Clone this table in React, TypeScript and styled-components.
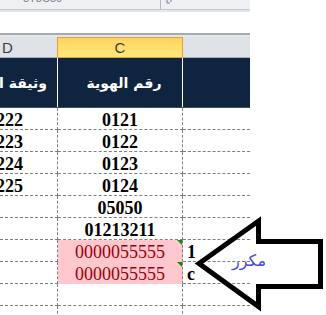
import styled, { createGlobalStyle } from "styled-components";

const GlobalStyle = createGlobalStyle`
  html, body {
    margin: 0;
    padding: 0;
    background: #ffffff;
  }
  body {
    width: 326px;
    height: 315px;
    overflow: hidden;
  }
`;

interface SheetRow {
  d: string;
  c: string;
  e?: string;
  dup?: boolean;
}

const rows: SheetRow[] = [
  { d: "222", c: "0121" },
  { d: "223", c: "0122" },
  { d: "224", c: "0123" },
  { d: "225", c: "0124" },
  { d: "", c: "05050" },
  { d: "", c: "01213211" },
  { d: "", c: "0000055555", e: "1", dup: true },
  { d: "", c: "0000055555", e: "c", dup: true },
  { d: "", c: "" },
  { d: "", c: "" },
];

const App = () => {
  return (
    <Stage>
      <GlobalStyle />
      <Window>
        <TopBar>
          <NameBox>
            <span>8T3C80</span>
          </NameBox>
          <BarIcon>
            <svg width="8" height="5" viewBox="0 0 8 5">
              <path d="M1 0v3h3M5 0v2" stroke="#7a7f86" strokeWidth="1" fill="none" />
            </svg>
          </BarIcon>
        </TopBar>
        <BarStrip />
        <Ribbon />
        <Divider />
        <ColHeaders>
          <ColLetter $width={57}>D</ColLetter>
          <ColLetter $width={126} $selected>
            C
          </ColLetter>
          <ColLetter $width={67} />
        </ColHeaders>
        <TitleRow>
          <TitleCell $col="d">وثيقة السفر</TitleCell>
          <TitleCell $col="c">رقم الهوية</TitleCell>
          <TitleCell $col="e" />
        </TitleRow>
        {rows.map((row, i) => (
          <DataRow key={i}>
            <DCell>{row.d}</DCell>
            <CCell $dup={row.dup}>{row.c}</CCell>
            <ECell>{row.e}</ECell>
          </DataRow>
        ))}
      </Window>
      <Arrow width="326" height="315" viewBox="0 0 326 315">
        <path
          d="M199 263.5 L258.5 221 L258.5 241.5 L320.5 241.5 L320.5 286.5 L258.5 286.5 L258.5 306.5 Z"
          fill="none"
          stroke="#000000"
          strokeWidth="5"
          strokeLinejoin="miter"
        />
      </Arrow>
      <Callout>مكرر</Callout>
    </Stage>
  );
};
export default App;

const Stage = styled.div`
  position: relative;
  width: 326px;
  height: 315px;
  overflow: hidden;
  background: #ffffff;
`;

const Window = styled.div`
  width: 250px;
  display: flex;
  flex-direction: column;
`;

const TopBar = styled.div`
  height: 9px;
  display: flex;
  background: #eef0f3;
  border-bottom: 1px solid #c3c8ce;
  overflow: hidden;
`;

const NameBox = styled.div`
  width: 161px;
  border-right: 1px solid #b4b9bf;
  padding-left: 23px;
  box-sizing: border-box;
  font-family: "Liberation Sans", Arial, sans-serif;
  font-size: 11px;
  color: #7d8187;

  span {
    display: block;
    margin-top: -8px;
    line-height: 12px;
  }
`;

const BarIcon = styled.div`
  padding-left: 5px;
  display: flex;
  align-items: flex-start;
`;

const BarStrip = styled.div`
  height: 2px;
  background: #e3e6ea;
`;

const Ribbon = styled.div`
  height: 21px;
  background: #ffffff;
`;

const Divider = styled.div`
  height: 2px;
  background: #a6abb1;
  border-bottom: 2px solid #e4e7eb;
`;

const ColHeaders = styled.div`
  display: flex;
  height: 21px;
  background: #dfe3e8;
  border-bottom: 1px solid #a9b0b8;
  box-sizing: border-box;
`;

const ColLetter = styled.div<{ $width: number; $selected?: boolean }>`
  width: ${(p) => p.$width}px;
  box-sizing: border-box;
  display: flex;
  align-items: center;
  justify-content: ${(p) => (p.$selected ? "center" : "flex-start")};
  padding-left: ${(p) => (p.$selected ? 0 : 2)}px;
  font-family: "Liberation Sans", Arial, sans-serif;
  font-size: 15px;
  color: #3c3c3c;
  ${(p) =>
    p.$selected &&
    `
    background: linear-gradient(to bottom, #fdd45e, #ffe77e);
    border: 1px solid #e0a23a;
    margin-bottom: -1px;
  `}
`;

const TitleRow = styled.div`
  display: flex;
  height: 50px;
  background: #0f243e;
  border-bottom: 1px solid #3d4c5f;
  box-sizing: border-box;
`;

const TitleCell = styled.div<{ $col: "d" | "c" | "e" }>`
  width: ${(p) => (p.$col === "d" ? 58 : p.$col === "c" ? 125 : 67)}px;
  box-sizing: border-box;
  border-right: ${(p) => (p.$col === "e" ? "none" : "1px solid #ffffff")};
  display: flex;
  align-items: center;
  justify-content: ${(p) => (p.$col === "d" ? "flex-start" : "center")};
  direction: rtl;
  white-space: nowrap;
  overflow: hidden;
  padding-right: ${(p) => (p.$col === "d" ? 10 : 0)}px;
  padding-left: ${(p) => (p.$col === "c" ? 8 : 0)}px;
  font-family: "DejaVu Sans", sans-serif;
  font-weight: bold;
  font-size: 14px;
  color: #ffffff;
`;

const DataRow = styled.div`
  display: flex;
  height: 22px;
`;

const BaseCell = styled.div`
  box-sizing: border-box;
  height: 22px;
  border-bottom: 1px dashed #7f7f7f;
  font-family: "Liberation Serif", "Times New Roman", serif;
  font-weight: bold;
  font-size: 18px;
  line-height: 24px;
  color: #000000;
  white-space: nowrap;
  overflow: hidden;
`;

const DCell = styled(BaseCell)`
  width: 58px;
  border-right: 1px dashed #7f7f7f;
  text-align: right;
  padding-right: 34px;
  display: flex;
  justify-content: flex-end;
  overflow: hidden;
`;

const CCell = styled(BaseCell)<{ $dup?: boolean }>`
  position: relative;
  width: 125px;
  border-right: 1px dashed #7f7f7f;
  text-align: center;
  ${(p) =>
    p.$dup &&
    `
    background: #ffc7ce;
    color: #9c0006;
    font-weight: normal;
    border-bottom-color: #ffc7ce;

    &::after {
      content: "";
      position: absolute;
      top: 0;
      right: 0;
      border-top: 5px solid #138a13;
      border-left: 5px solid transparent;
    }
  `}
`;

const ECell = styled(BaseCell)`
  width: 67px;
  padding-left: 4px;
`;

const Arrow = styled.svg`
  position: absolute;
  top: 0;
  left: 0;
  pointer-events: none;
`;

const Callout = styled.div`
  position: absolute;
  left: 232px;
  top: 251px;
  direction: rtl;
  font-family: "DejaVu Sans", sans-serif;
  font-size: 16px;
  color: #4848d8;
`;
